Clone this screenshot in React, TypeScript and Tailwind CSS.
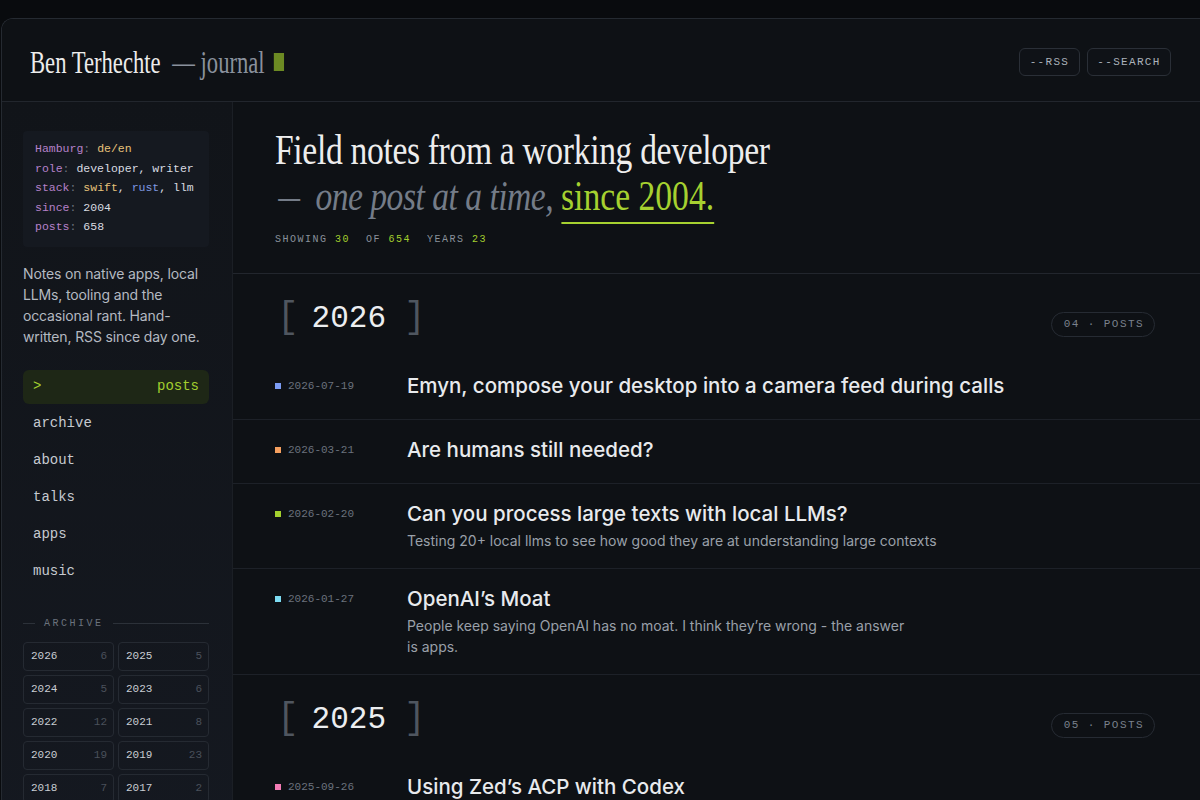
import React from "react";

const mono = "font-['Liberation_Mono',monospace]";
const serif = "font-['Liberation_Serif',serif]";
const sans = "font-['Inter',sans-serif]";

type Post = { date: string; color: string; title: string; desc?: string; descW?: string };

const posts2026: Post[] = [
  { date: "2026-07-19", color: "bg-[#7b9cf4]", title: "Emyn, compose your desktop into a camera feed during calls" },
  { date: "2026-03-21", color: "bg-[#f6a05f]", title: "Are humans still needed?" },
  {
    date: "2026-02-20",
    color: "bg-[#a3d12e]",
    title: "Can you process large texts with local LLMs?",
    desc: "Testing 20+ local llms to see how good they are at understanding large contexts",
  },
  {
    date: "2026-01-27",
    color: "bg-[#7ddcf2]",
    title: "OpenAI’s Moat",
    desc: "People keep saying OpenAI has no moat. I think they’re wrong - the answer is apps.",
    descW: "max-w-[505px]",
  },
];

const posts2025: Post[] = [
  { date: "2025-09-26", color: "bg-[#f27bb4]", title: "Using Zed’s ACP with Codex" },
  { date: "2025-08-14", color: "bg-[#7b9cf4]", title: "Building a native macOS app in 2025" },
];

const archive = [
  ["2026", "6"],
  ["2025", "5"],
  ["2024", "5"],
  ["2023", "6"],
  ["2022", "12"],
  ["2021", "8"],
  ["2020", "19"],
  ["2019", "23"],
  ["2018", "7"],
  ["2017", "2"],
  ["2016", "4"],
  ["2015", "9"],
];

function YearHeader({ year, count }: { year: string; count: string }) {
  return (
    <div className="flex items-center justify-between pl-[42px] pr-[45px] pt-6 pb-[18px]">
      <div className={`flex items-center h-10 ${mono}`}>
        <span className="text-[36px] font-light text-[#4f565f] leading-none ml-[2px]">[</span>
        <span className="text-[31px] text-[#eceef0] leading-none ml-[13px] mr-[18px]">{year}</span>
        <span className="text-[36px] font-light text-[#4f565f] leading-none">]</span>
      </div>
      <div
        className={`${mono} mt-[12px] h-[25px] pl-[12px] pr-[10px] flex items-center rounded-full border border-[#262b33] text-[11px] tracking-[0.13em] text-[#7a818c]`}
      >
        {count} · POSTS
      </div>
    </div>
  );
}

function PostRow({ p, last }: { p: Post; last?: boolean }) {
  return (
    <div className={`flex ${last ? "" : "border-b border-[#1d2128]"} pl-[42px] pr-[45px] pt-[14px] pb-[17px]`}>
      <div className="w-[132px] shrink-0 flex items-center h-8 gap-[7px]">
        <span className={`w-[6px] h-[6px] ${p.color}`} />
        <span className={`${mono} text-[11px] text-[#6b727d]`}>{p.date}</span>
      </div>
      <div className="flex flex-col">
        <div className={`${sans} h-8 leading-8 text-[20.5px] font-medium text-[#e8eaed]`}>{p.title}</div>
        {p.desc && (
          <div className={`${sans} text-[14px] leading-[21px] text-[#9aa0a9] ${p.descW ?? ""}`}>{p.desc}</div>
        )}
      </div>
    </div>
  );
}

export default function App() {
  return (
    <div className="h-[800px] w-[1200px] overflow-hidden bg-[#090b0e] pl-px pt-[18px]">
      <div className="w-[1199px] h-[900px] rounded-tl-[12px] border-l border-t border-[#252a31] bg-[#0e1115] overflow-hidden flex flex-col">
        {/* header */}
        <header className="h-[83px] shrink-0 flex items-center justify-between pl-[28px] pr-[29px] pt-[4px] border-b border-[#22262d] bg-[#0e1115]">
          <div className={`${serif} origin-left scale-x-[0.73] flex items-center text-[31px] leading-none whitespace-nowrap`}>
            <span className="text-[#ececec]">Ben Terhechte</span>
            <span className="text-[#8a919d] ml-[16px]">— journal</span>
            <span className="ml-[13px] w-[14px] h-[18px] bg-[#6c8a23] inline-block" />
          </div>
          <div className={`${mono} flex gap-[7px] text-[11px] tracking-[0.12em] text-[#acb2bb]`}>
            <div className="h-[28px] w-[61px] flex items-center justify-center rounded-md border border-[#2a2f37] bg-[#0f1217]">
              --RSS
            </div>
            <div className="h-[28px] w-[84px] flex items-center justify-center rounded-md border border-[#2a2f37] bg-[#0f1217]">
              --SEARCH
            </div>
          </div>
        </header>

        <div className="flex flex-1">
          {/* sidebar */}
          <aside className="w-[231px] shrink-0 border-r border-[#1b1f25] bg-gradient-to-b from-[#111419] to-[#151921] pl-[21px] pr-[23px] pt-[29px]">
            <div className={`${mono} bg-[#151920] rounded-sm pl-3 pt-2 pb-[10px] text-[11.5px] leading-[19.5px] text-[#d8dbe0]`}>
              <div>
                <span className="text-[#b581c9]">Hamburg</span>
                <span className="text-[#6b727d]">:</span> <span className="text-[#e6c27a]">de/en</span>
              </div>
              <div>
                <span className="text-[#b581c9]">role</span>
                <span className="text-[#6b727d]">:</span> developer, writer
              </div>
              <div>
                <span className="text-[#b581c9]">stack</span>
                <span className="text-[#6b727d]">:</span> <span className="text-[#e6c27a]">swift</span>,{" "}
                <span className="text-[#7f98e0]">rust</span>, llm
              </div>
              <div>
                <span className="text-[#b581c9]">since</span>
                <span className="text-[#6b727d]">:</span> 2004
              </div>
              <div>
                <span className="text-[#b581c9]">posts</span>
                <span className="text-[#6b727d]">:</span> 658
              </div>
            </div>

            <p className={`${sans} mt-[16px] text-[14px] leading-[21px] text-[#b4b9c1] tracking-[-0.01em]`}>
              Notes on native apps, local LLMs, tooling and the occasional rant. Hand-written, RSS since day one.
            </p>

            <nav className={`${mono} mt-[23px] flex flex-col gap-[3px] text-[14px]`}>
              <div className="h-[34px] rounded-md bg-[#1e2716] flex items-center justify-between px-[10px] text-[#a3cf2e]">
                <span>&gt;</span>
                <span>posts</span>
              </div>
              {["archive", "about", "talks", "apps", "music"].map((n) => (
                <div key={n} className="h-[34px] flex items-center px-[10px] text-[#c6cad0]">
                  {n}
                </div>
              ))}
            </nav>

            <div className={`${mono} mt-[27px] flex items-center gap-[9px] text-[10px] tracking-[0.25em] text-[#6b727d]`}>
              <span className="w-[12px] h-px bg-[#2c3139]" />
              <span>ARCHIVE</span>
              <span className="flex-1 h-px bg-[#2c3139]" />
            </div>

            <div className="mt-[11px] grid grid-cols-2 gap-[4px]">
              {archive.map(([y, c]) => (
                <div
                  key={y}
                  className={`${mono} h-[29px] rounded-[4px] border border-[#252a32] flex items-center justify-between pl-[7px] pr-[6px] text-[11px]`}
                >
                  <span className="text-[#c9cdd3]">{y}</span>
                  <span className="text-[#4a505b]">{c}</span>
                </div>
              ))}
            </div>
          </aside>

          {/* main */}
          <main className="flex-1 flex flex-col">
            <section className="pl-[42px] pt-[25px] pb-[26px] border-b border-[#22262d]">
              <div className={`${serif} origin-left scale-x-[0.8] text-[42px] leading-[46px] whitespace-nowrap`}>
                <div className="text-[#ededed] tracking-[-0.01em]">Field notes from a working developer</div>
                <div>
                  <span className="inline-block origin-left scale-x-[0.65] ml-[4px] mr-[-6px] text-[#747c88]">—</span>{" "}
                  <span className="italic text-[#747c88] tracking-[-0.015em]">one post at a time, </span>
                  <span className="text-[#a6d130] border-b-2 border-[#a6d130] pb-[3px]">since 2004.</span>
                </div>
              </div>
              <div className={`${mono} mt-[13px] flex gap-[16px] text-[10px] tracking-[0.15em] text-[#8a919c]`}>
                <span>
                  SHOWING <span className="text-[#a3cf2e]">30</span>
                </span>
                <span>
                  OF <span className="text-[#a3cf2e]">654</span>
                </span>
                <span>
                  YEARS <span className="text-[#a3cf2e]">23</span>
                </span>
              </div>
            </section>

            <section className="border-b border-[#1d2128]">
              <YearHeader year="2026" count="04" />
              {posts2026.map((p, i) => (
                <PostRow key={p.date} p={p} last={i === posts2026.length - 1} />
              ))}
            </section>

            <section>
              <YearHeader year="2025" count="05" />
              {posts2025.map((p) => (
                <PostRow key={p.date} p={p} />
              ))}
            </section>
          </main>
        </div>
      </div>
    </div>
  );
}
